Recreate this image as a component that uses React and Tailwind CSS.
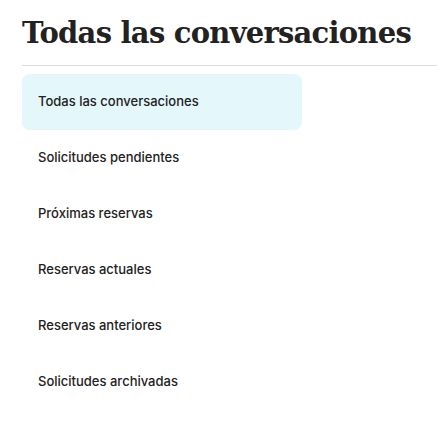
export default function App() {
  const items = [
    "Todas las conversaciones",
    "Solicitudes pendientes",
    "Próximas reservas",
    "Reservas actuales",
    "Reservas anteriores",
    "Solicitudes archivadas",
  ];
  return (
    <div className="w-[437px] h-[422px] bg-white overflow-hidden pl-[22px]">
      <h1
        className="pt-[14px] text-[29px] leading-[38px] font-bold text-[#222222] whitespace-nowrap tracking-[-0.75px]"
        style={{ fontFamily: '"DejaVu Serif", serif' }}
      >
        Todas las conversaciones
      </h1>
      <div className="mt-[13px] h-px bg-[#dddddd]" />
      <div className="mt-[8px] flex flex-col w-[280px]">
        {items.map((t, i) => (
          <div
            key={t}
            className={`h-[56px] flex items-center px-4 rounded-lg text-[13px] font-medium text-[#222222] ${
              i === 0 ? "bg-[#e4f7fb]" : ""
            }`}
            style={{ fontFamily: 'Inter, sans-serif' }}
          >
            {t}
          </div>
        ))}
      </div>
    </div>
  );
}
